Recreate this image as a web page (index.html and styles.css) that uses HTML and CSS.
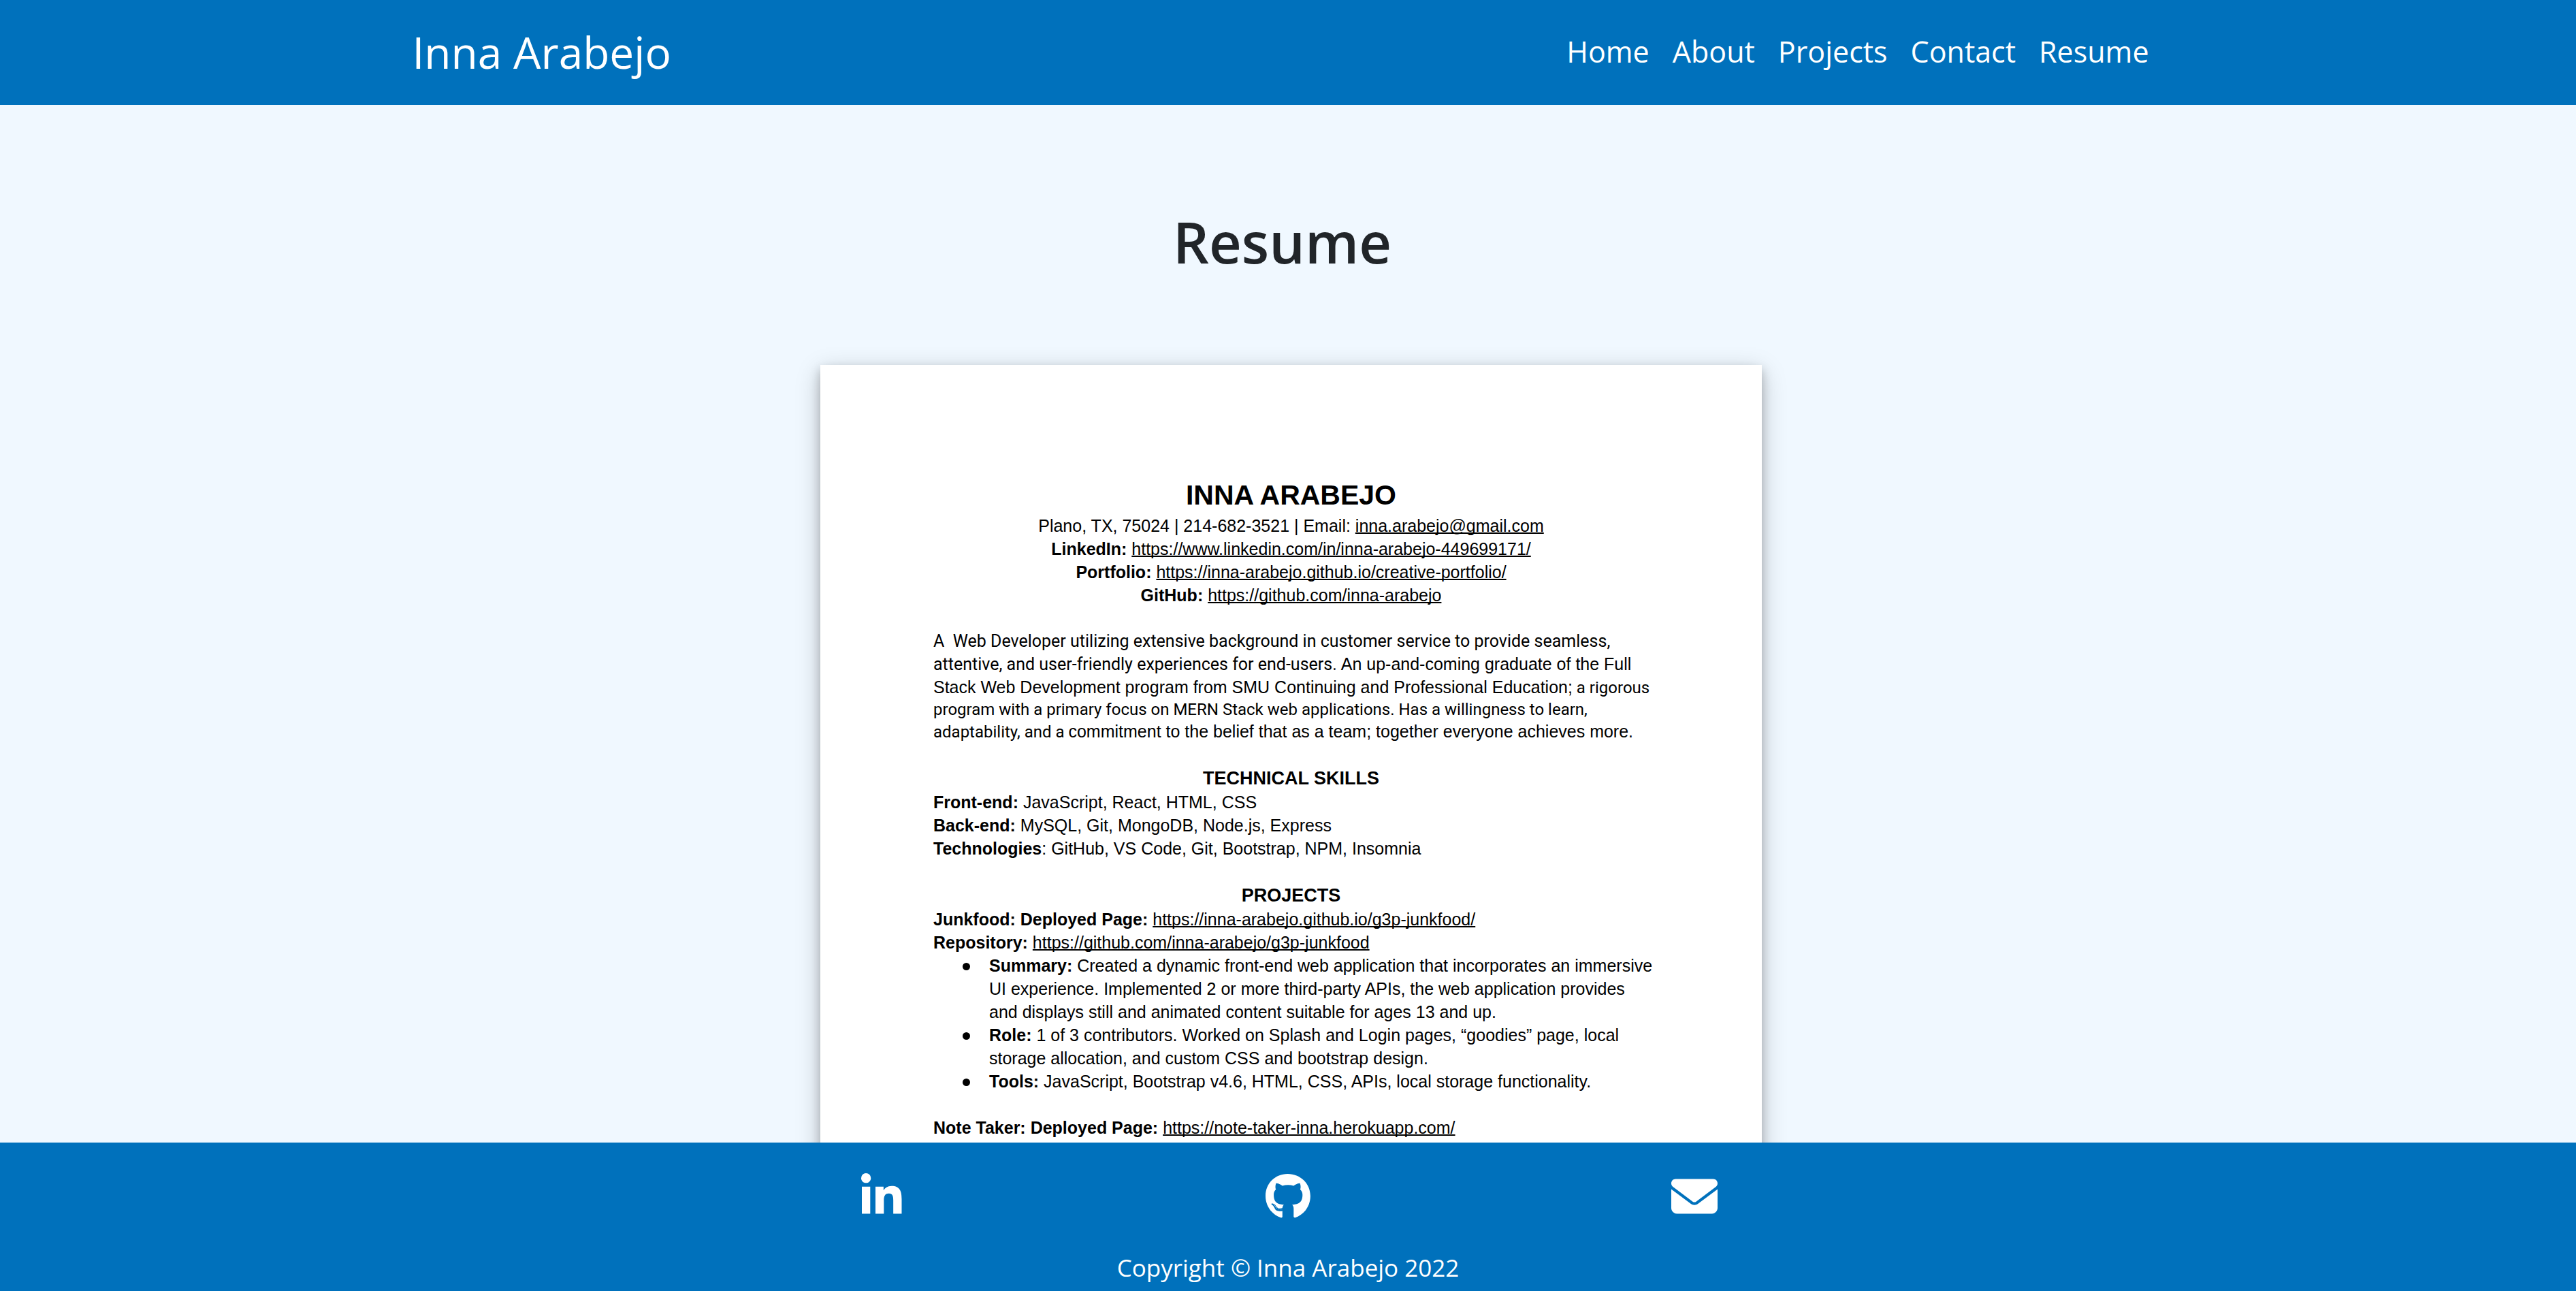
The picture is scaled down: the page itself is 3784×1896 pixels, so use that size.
FILE: index.html
```html
<!DOCTYPE html>
<html lang="en">
<head>
<meta charset="utf-8">
<meta name="viewport" content="width=device-width, initial-scale=1">
<title>Inna Arabejo</title>
<link rel="stylesheet" href="styles.css">
</head>
<body>
<header class="site-header">
  <a class="brand" href="#home">Inna Arabejo</a>
  <nav class="site-nav">
    <a href="#home">Home</a>
    <a href="#about">About</a>
    <a href="#projects">Projects</a>
    <a href="#contact">Contact</a>
    <a href="#resume">Resume</a>
  </nav>
</header>

<main class="content" id="resume">
  <h1 class="page-title">Resume</h1>
  <article class="sheet">
    <header class="sheet-header">
      <h2 class="sheet-name">INNA ARABEJO</h2>
      <p>Plano, TX, 75024 | 214-682-3521 | Email: <a href="mailto:inna.arabejo@gmail.com">inna.arabejo@gmail.com</a></p>
      <p><b>LinkedIn:</b> <a href="https://www.linkedin.com/in/inna-arabejo-449699171/">https://www.linkedin.com/in/inna-arabejo-449699171/</a></p>
      <p><b>Portfolio:</b> <a href="https://inna-arabejo.github.io/creative-portfolio/">https://inna-arabejo.github.io/creative-portfolio/</a></p>
      <p><b>GitHub:</b> <a href="https://github.com/inna-arabejo">https://github.com/inna-arabejo</a></p>
    </header>

    <p class="summary"><span class="lead">A&nbsp; Web Developer utilizing extensive background in customer service to provide seamless,<br>attentive, and user-friendly experiences for end-users.</span> <span class="plain">An up-and-coming graduate of the Full<br>Stack Web Development program from SMU Continuing and Professional Education;</span> a rigorous<br>program with a primary focus on MERN Stack web applications. Has a willingness to learn,<br>adaptability, and a <span class="plain">commitment to the belief that as a team; together everyone achieves more.</span></p>

    <section class="sheet-section">
      <h3>TECHNICAL SKILLS</h3>
      <p><b>Front-end:</b> JavaScript, React, HTML, CSS</p>
      <p><b>Back-end:</b> MySQL, Git, MongoDB, Node.js, Express</p>
      <p><b>Technologies</b>: GitHub, VS Code, Git, Bootstrap, NPM, Insomnia</p>
    </section>

    <section class="sheet-section">
      <h3>PROJECTS</h3>
      <p><b>Junkfood: Deployed Page:</b> <a href="https://inna-arabejo.github.io/g3p-junkfood/">https://inna-arabejo.github.io/g3p-junkfood/</a></p>
      <p><b>Repository:</b> <a href="https://github.com/inna-arabejo/g3p-junkfood">https://github.com/inna-arabejo/g3p-junkfood</a></p>
      <ul>
        <li><b>Summary:</b> Created a dynamic front-end web application that incorporates an immersive<br>UI experience. Implemented 2 or more third-party APIs, the web application provides<br>and displays still and animated content suitable for ages 13 and up.</li>
        <li><b>Role:</b> 1 of 3 contributors. Worked on Splash and Login pages, “goodies” page, local<br>storage allocation, and custom CSS and bootstrap design.</li>
        <li><b>Tools:</b> JavaScript, Bootstrap v4.6, HTML, CSS, APIs, local storage functionality.</li>
      </ul>
      <p><b>Note Taker: Deployed Page:</b> <a href="https://note-taker-inna.herokuapp.com/">https://note-taker-inna.herokuapp.com/</a></p>
    </section>
  </article>
</main>

<footer class="site-footer">
  <div class="social">
    <a href="https://www.linkedin.com/in/inna-arabejo-449699171/" aria-label="LinkedIn">
      <svg viewBox="0 0 448 512" aria-hidden="true"><path d="M100.28 448H7.4V148.9h92.88zM53.79 108.1C24.09 108.1 0 83.5 0 53.8a53.79 53.79 0 0 1 107.58 0c0 29.7-24.1 54.3-53.79 54.3zM447.9 448h-92.68V302.4c0-34.7-.7-79.2-48.29-79.2-48.29 0-55.69 37.7-55.69 76.7V448h-92.78V148.9h89.08v40.8h1.3c12.4-23.5 42.69-48.3 87.88-48.3 94 0 111.28 61.9 111.28 142.3V448z"/></svg>
    </a>
    <a href="https://github.com/inna-arabejo" aria-label="GitHub">
      <svg viewBox="0 0 496 512" aria-hidden="true"><path d="M165.9 397.4c0 2-2.3 3.6-5.2 3.6-3.3.3-5.6-1.3-5.6-3.6 0-2 2.3-3.6 5.2-3.6 3-.3 5.6 1.3 5.6 3.6zm-31.1-4.5c-.7 2 1.3 4.3 4.3 4.9 2.6 1 5.6 0 6.2-2s-1.3-4.3-4.3-5.2c-2.6-.7-5.5.3-6.2 2.3zm44.2-1.7c-2.9.7-4.9 2.6-4.6 4.9.3 2 2.9 3.3 5.9 2.6 2.9-.7 4.9-2.6 4.6-4.6-.3-1.9-3-3.2-5.9-2.9zM244.8 8C106.1 8 0 113.3 0 252c0 110.9 69.8 205.8 169.5 239.2 12.8 2.3 17.3-5.6 17.3-12.1 0-6.2-.3-40.4-.3-61.4 0 0-70 15-84.7-29.8 0 0-11.4-29.1-27.8-36.6 0 0-22.9-15.7 1.6-15.4 0 0 24.9 2 38.6 25.8 21.9 38.6 58.6 27.5 72.9 20.9 2.3-16 8.8-27.1 16-33.7-55.9-6.2-112.3-14.3-112.3-110.5 0-27.5 7.6-41.3 23.6-58.9-2.6-6.5-11.1-33.3 2.6-67.9 20.9-6.5 69 27 69 27 20-5.6 41.5-8.5 62.8-8.5s42.8 2.9 62.8 8.5c0 0 48.1-33.6 69-27 13.7 34.7 5.2 61.4 2.6 67.9 16 17.7 25.8 31.5 25.8 58.9 0 96.5-58.9 104.2-114.8 110.5 9.2 7.9 17 22.9 17 46.4 0 33.7-.3 75.4-.3 83.6 0 6.5 4.6 14.4 17.3 12.1C428.2 457.8 496 362.9 496 252 496 113.3 383.5 8 244.8 8zM97.2 352.9c-1.3 1-1 3.3.7 5.2 1.6 1.6 3.9 2.3 5.2 1 1.3-1 1-3.3-.7-5.2-1.6-1.6-3.9-2.3-5.2-1zm-10.8-8.1c-.7 1.3.3 2.9 2.3 3.9 1.6 1 3.6.7 4.3-.7.7-1.3-.3-2.9-2.3-3.9-2-.6-3.6-.3-4.3.7zm32.4 35.6c-1.6 1.3-1 4.3 1.3 6.2 2.3 2.3 5.2 2.6 6.5 1 1.3-1.3.7-4.3-1.3-6.2-2.2-2.3-5.2-2.6-6.5-1zm-11.4-14.7c-1.6 1-1.6 3.6 0 5.9 1.6 2.3 4.3 3.3 5.6 2.3 1.6-1.3 1.6-3.9 0-6.2-1.4-2.3-4-3.3-5.6-2z"/></svg>
    </a>
    <a href="mailto:inna.arabejo@gmail.com" aria-label="Email">
      <svg viewBox="0 0 512 512" aria-hidden="true"><path d="M464 64C490.5 64 512 85.5 512 112C512 127.1 504.9 141.3 492.8 150.4L275.2 313.6C263.8 322.1 248.2 322.1 236.8 313.6L19.2 150.4C7.113 141.3 0 127.1 0 112C0 85.5 21.49 64 48 64H464zM217.6 339.2C240.4 356.3 271.6 356.3 294.4 339.2L512 176V384C512 419.3 483.3 448 448 448H64C28.65 448 0 419.3 0 384V176L217.6 339.2z"/></svg>
    </a>
  </div>
  <p class="copyright">Copyright © Inna Arabejo 2022</p>
</footer>
</body>
</html>
```

FILE: styles.css
```css
* {
  box-sizing: border-box;
}

body {
  display: flex;
  flex-direction: column;
  height: 100vh;
  margin: 0;
  background: #f0f8ff;
  color: #212529;
  font-family: "Open Sans", "Noto Sans", sans-serif;
}

a {
  color: inherit;
}

h1, h2, h3, p, ul {
  margin: 0;
}

/* Top bar */
.site-header {
  display: flex;
  flex-wrap: wrap;
  flex-shrink: 0;
  align-items: center;
  justify-content: space-between;
  padding: 32px 16%;
  background: #0071bc;
  color: #fff;
}

.site-header a {
  text-decoration: none;
}

.brand {
  font-size: 64px;
  line-height: 90px;
}

.site-nav {
  display: flex;
  flex-wrap: wrap;
  gap: 34px;
  padding: 0 22px 3px 0;
  font-size: 43px;
  line-height: 60px;
}

/* Scrolling content between the bars */
.content {
  flex: 1;
  min-height: 0;
  padding-left: 9px;
  overflow-y: auto;
  scrollbar-width: none;
}

.page-title {
  padding: 146px 26px 126px 0;
  font-size: 83px;
  font-weight: 600;
  line-height: 110px;
  text-align: center;
}

/* Resume page */
.sheet {
  width: 100%;
  max-width: 1383px;
  margin: 0 auto 160px;
  padding: 163px 166px;
  background: #fff;
  box-shadow: 0 7px 14px rgba(0, 0, 0, 0.22), 0 10px 34px rgba(0, 0, 0, 0.22);
  color: #000;
  font-family: "Liberation Sans", Arial, sans-serif;
  font-size: 25px;
  line-height: 34px;
}

.sheet a {
  text-decoration-skip-ink: none;
  text-decoration-thickness: 2px;
}

.sheet-header {
  text-align: center;
}

.sheet-name {
  font-size: 41px;
  line-height: 56px;
}

.summary {
  margin: 34px -24px 0 0;
  font-family: Roboto, sans-serif;
  font-size: 24px;
  line-height: 32px;
}

.lead {
  font-size: 25px;
  line-height: 34px;
}

.plain {
  font-family: "Liberation Sans", Arial, sans-serif;
  font-size: 25px;
  line-height: 33px;
}

.sheet-section {
  margin-top: 34px;
}

.sheet-section h3 {
  font-size: 27px;
  line-height: 36px;
  text-align: center;
}

.sheet-section ul {
  margin: 0 -24px 34px 0;
  padding-left: 82px;
  list-style: none;
}

.sheet-section li::before {
  content: "";
  display: inline-block;
  width: 11px;
  height: 11px;
  margin: 0 28px 0 -39px;
  border-radius: 50%;
  background: #000;
  vertical-align: 2px;
}

/* Bottom bar */
.site-footer {
  flex-shrink: 0;
  padding: 45px 16px 12px;
  background: #0071bc;
  color: #fff;
}

.social {
  display: grid;
  grid-template-columns: repeat(3, 1fr);
  justify-items: center;
  max-width: 1791px;
  margin: 0 auto;
}

.social svg {
  display: block;
  height: 68px;
  fill: currentColor;
}

.copyright {
  margin-top: 49px;
  font-size: 35px;
  line-height: 44px;
  text-align: center;
}
```
